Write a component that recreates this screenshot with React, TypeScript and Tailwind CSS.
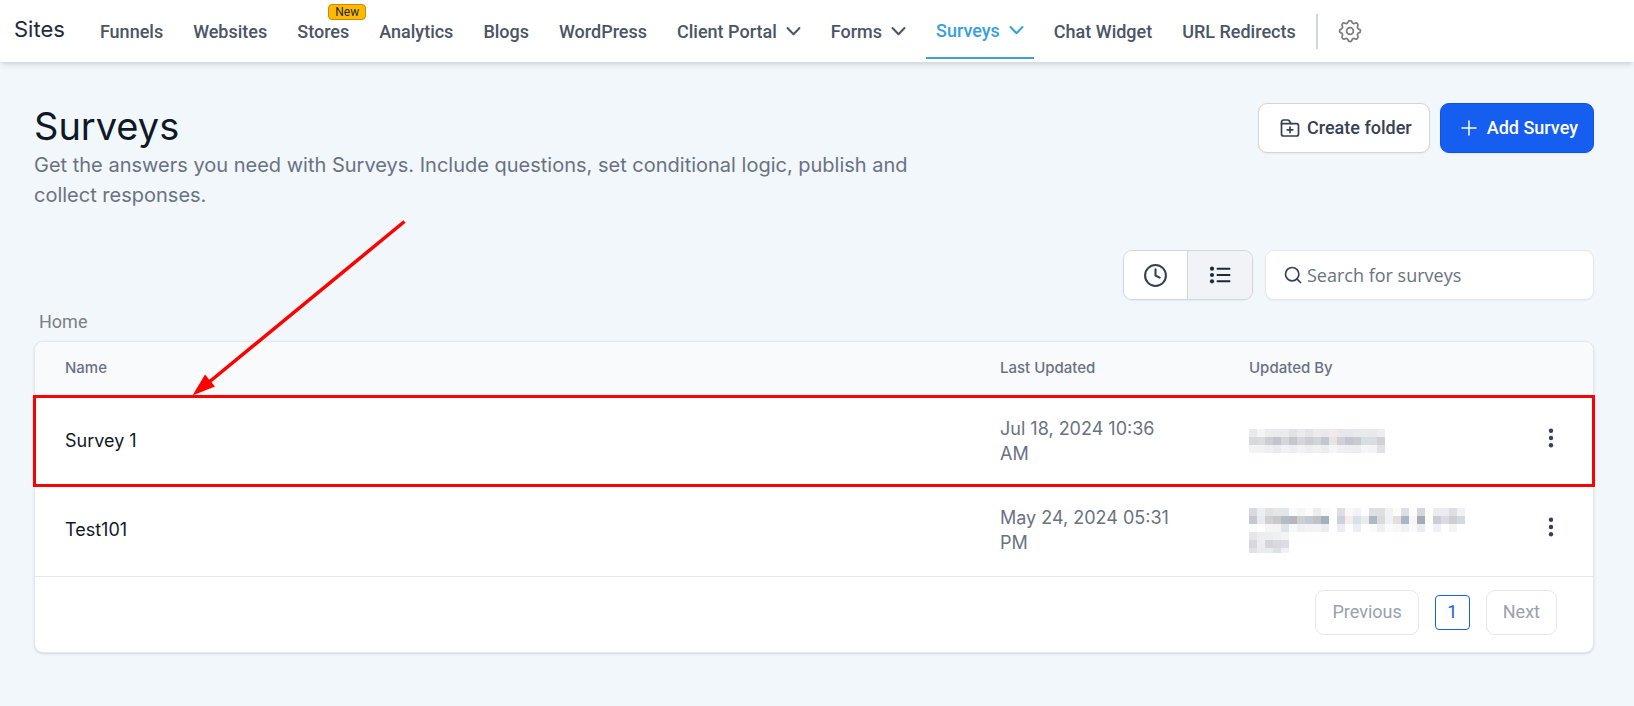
import { Clock, Plus, Search } from "lucide-react";

const navItems = [
  { label: "Funnels" },
  { label: "Websites" },
  { label: "Stores", badge: "New" },
  { label: "Analytics" },
  { label: "Blogs" },
  { label: "WordPress" },
  { label: "Client Portal", menu: true },
  { label: "Forms", menu: true },
  { label: "Surveys", menu: true, active: true },
  { label: "Chat Widget" },
  { label: "URL Redirects" },
];

const surveys = [
  {
    name: "Survey 1",
    updated: "Jul 18, 2024 10:36 AM",
    highlighted: true,
    mask: [
      "e9eaec f4f4f5 ebecee eaebed eaebed e2e2e4 ebebed e4e4e7 ebebee e8e9ec f0ebe9 e8e8ec e4e7ed e9eaec e9eaeb e9e9ea edeef1",
      "d8d9da dcdcdf cdced1 c2c4ce d3d6da c5c7cc d4d6da cdccd0 d0d5da c4c7d0 e9e4e1 cfd1d6 c3c6ce c9cacf d8dde4 dadce2 cfd1d6",
      "f2f4f4 f1f3f3 eeeff1 e9ebee f1f2f4 edeef0 f1f2f3 eeeef1 f0f1f3 ebedf0 f7f6f6 f0f0f3 eceef0 ecedef f4f6f8 f2f3f4 e1e2e4",
    ],
  },
  {
    name: "Test101",
    updated: "May 24, 2024 05:31 PM",
    mask: [
      "d9dadf eaeff3 e2e2e3 e5e6e7 e3e7ea fafafa f5f6f6 fafcfc ecedee fafafa fffefc dcdfe6 fcf6f5 f0f4fa ffffff dfe0e5 dfdfe1 f0f2f8 fffaf5 dae0e6 fffcfa d5d7de fffffa eaecf0 ebecf3 dfdfe3 f0f1f6",
      "c7c7cd ebebef d0d0d2 c9c8ca b2bdcc b5b6c0 cecfd2 c4c8d0 c2c1c5 a5b0bf fffffe ced1d8 f4ede9 d7e1ea ecebec aeb8c4 dadadd eff1f7 e4dfdd abb5c5 f8f5f4 a6abb8 fdfdf8 cacdd4 d9dce7 cecdd1 d3d8e1",
      "fbfafa ffffff f5f5f5 f2f4f6 e0e4e8 f7f8fa eff0f3 f2f3f6 f2f3f6 eaecf0 ffffff ebedf2 fffefe ebeef3 ffffff fafafa efeff1 f9fafc f5f7f8 f0f1f5 fafafc ebedf2 ffffff f0f1f4 ffffff f4f4f5 fdfeff",
      "e5e6e8 ecedf1 eeeef1 f0f0f2 f3f4f4",
      "d5d9df ebedf0 d3d5d8 d9dadf dadee3",
      "e0e2e5 e9edf3 eaebee dce0e7 f1f2f5",
    ],
  },
];

function PixelMask({ rows }: { rows: string[] }) {
  return (
    <svg
      width={rows[0].split(" ").length * 8}
      height={rows.length > 3 ? 45 : 24}
      shapeRendering="crispEdges"
      role="img"
      aria-label="Hidden name"
    >
      {rows.map((row, y) =>
        row.split(" ").map((color, x) => (
          <rect key={`${x}-${y}`} x={x * 8} y={y * 8} width="8" height="8" fill={`#${color}`} />
        ))
      )}
    </svg>
  );
}

function ChevronIcon() {
  return (
    <svg width="15" height="16" viewBox="0 0 15 16" fill="none" stroke="currentColor" strokeWidth="2" strokeLinecap="round" strokeLinejoin="round">
      <path d="M1.5 4l6 6.200 6-6.200" />
    </svg>
  );
}

function CogIcon() {
  return (
    <svg className="size-7" viewBox="0 0 24 24" fill="none" stroke="currentColor" strokeWidth="1.500">
      <path d="M10.325 4.317c.426-1.756 2.924-1.756 3.35 0a1.724 1.724 0 0 0 2.573 1.066c1.543-.94 3.31.826 2.37 2.37a1.724 1.724 0 0 0 1.065 2.572c1.756.426 1.756 2.924 0 3.35a1.724 1.724 0 0 0-1.066 2.573c.94 1.543-.826 3.31-2.37 2.37a1.724 1.724 0 0 0-2.572 1.065c-.426 1.756-2.924 1.756-3.35 0a1.724 1.724 0 0 0-2.573-1.066c-1.543.94-3.31-.826-2.37-2.37a1.724 1.724 0 0 0-1.065-2.572c-1.756-.426-1.756-2.924 0-3.35a1.724 1.724 0 0 0 1.066-2.573c-.94-1.543.826-3.31 2.37-2.37.996.608 2.296.07 2.572-1.065z" />
      <circle cx="12" cy="12" r="2.900" />
    </svg>
  );
}

function FolderPlusIcon() {
  return (
    <svg width="22" height="20" viewBox="0 0 22 20" fill="none" stroke="currentColor" strokeWidth="1.700" strokeLinecap="round" strokeLinejoin="round">
      <path d="M2.500 6V4a2 2 0 0 1 2-2h4.200a1.800 1.800 0 0 1 1.500.8L12 5.700" />
      <path d="M2.500 5.700h15a2 2 0 0 1 2 2V16a2 2 0 0 1-2 2h-13a2 2 0 0 1-2-2z" />
      <path d="M11 9v5.600M8.200 11.800h5.600" />
    </svg>
  );
}

function ListIcon() {
  return (
    <svg width="24" height="24" viewBox="0 0 24 24" fill="currentColor" stroke="currentColor" strokeWidth="2" strokeLinecap="round">
      <path d="M9.500 5.700H21.500M9.500 12H21.500M9.500 18.300H21.500" />
      <g stroke="none">
        <circle cx="4" cy="5.700" r="2.100" />
        <circle cx="4" cy="12" r="2.100" />
        <circle cx="4" cy="18.300" r="2.100" />
      </g>
    </svg>
  );
}

function NavBar() {
  return (
    <header className="relative bg-white shadow-md">
      <nav className="flex h-[62px] items-center font-[Roboto,sans-serif] text-lg font-medium text-gray-600">
        <h2 className="pb-1 pl-3.5 pr-5 font-[Inter,sans-serif] text-[22px] font-normal text-gray-800">
          Sites
        </h2>
        {navItems.map((item) => (
          <a
            key={item.label}
            href="#"
            className={
              item.active
                ? "mx-[5px] flex h-[59px] items-center gap-[9px] self-start border-b-2 border-[#38a0db] px-2.5 pt-1 text-[#38a0db]"
                : "relative flex items-center gap-[9px] px-[15px] pt-0.5"
            }
          >
            {item.label}
            {item.menu && <ChevronIcon />}
            {item.badge && (
              <span className="absolute -top-3 -right-0.5 rounded border border-yellow-600 bg-[#fdb900] px-1.5 text-xs font-normal leading-[14px] text-gray-800">
                {item.badge}
              </span>
            )}
          </a>
        ))}
        <button
          type="button"
          aria-label="Settings"
          className="ml-[5px] flex h-[35px] items-center border-l-2 border-gray-300 pl-[18px] text-[#7d7d7d]"
        >
          <CogIcon />
        </button>
      </nav>
    </header>
  );
}

function PageHeader() {
  return (
    <div className="flex items-start justify-between">
      <div className="max-w-[920px]">
        <h1 className="text-[38px] leading-[47px] text-gray-900">Surveys</h1>
        <p className="text-xl leading-[30px] text-gray-500">
          Get the answers you need with Surveys. Include questions, set
          conditional logic, publish and collect responses.
        </p>
      </div>
      <div className="flex gap-2.5 font-[Roboto,sans-serif] text-lg font-medium">
        <button
          type="button"
          className="flex h-[50px] items-center gap-1.5 rounded-[9px] border border-gray-300 bg-white pl-5 pr-[17px] text-gray-700 shadow-xs"
        >
          <FolderPlusIcon />
          Create folder
        </button>
        <button
          type="button"
          className="flex h-[50px] items-center gap-1.5 rounded-[9px] border border-[#0b53f0] bg-[#155eef] pl-4 pr-[15px] text-white shadow-xs"
        >
          <Plus className="size-6" strokeWidth={1.5} />
          Add Survey
        </button>
      </div>
    </div>
  );
}

function Toolbar() {
  return (
    <div className="mt-10 flex justify-end gap-3">
      <div className="flex h-[50px] overflow-hidden rounded-[9px] border border-gray-300 shadow-xs">
        <button type="button" aria-label="Recent" className="flex w-[63px] items-center justify-center bg-white text-gray-700">
          <Clock className="size-[25px]" />
        </button>
        <button type="button" aria-label="List" className="flex w-[65px] items-center justify-center border-l border-gray-300 bg-[#f2f3f7] text-gray-800">
          <ListIcon />
        </button>
      </div>
      <label className="flex h-[50px] w-[329px] items-center gap-1 rounded-[9px] border border-gray-200 bg-white px-[17px] shadow-xs">
        <Search className="size-5 text-gray-700" />
        <input
          type="search"
          aria-label="Search for surveys"
          placeholder="Search for surveys"
          className="min-w-0 flex-1 font-['Open_Sans',sans-serif] text-lg outline-none placeholder:text-gray-500"
        />
      </label>
    </div>
  );
}

function SurveyTable() {
  return (
    <div className="rounded-[9px] border border-gray-200 bg-white shadow-sm">
      <table className="w-full table-fixed text-left">
        <thead>
          <tr className="h-[55px] text-[15px] text-gray-500">
            <th className="rounded-tl-[9px] bg-gray-50 pb-0.5 pl-[30px] font-medium">Name</th>
            <th className="w-[249px] bg-gray-50 pb-0.5 pl-[30px] font-medium">Last Updated</th>
            <th className="w-[289px] bg-gray-50 pb-0.5 pl-[30px] font-medium">Updated By</th>
            <th aria-label="Actions" className="w-[85px] rounded-tr-[9px] bg-gray-50" />
          </tr>
        </thead>
        <tbody>
          {surveys.map((survey) => (
            <tr
              key={survey.name}
              className={
                survey.highlighted
                  ? "h-[88px] outline-3 -outline-offset-1 outline-[#ff0000]"
                  : "h-[91px] border-b border-gray-200"
              }
            >
              <td className="pl-[30px] text-lg text-gray-900">{survey.name}</td>
              <td className="pl-[30px] pr-10 text-lg leading-[25px] text-gray-500">{survey.updated}</td>
              <td className="pl-[30px]">
                <PixelMask rows={survey.mask} />
              </td>
              <td>
                <button type="button" aria-label={`Options for ${survey.name}`} className="flex w-full justify-center pb-1.5 text-gray-700">
                  <svg width="20" height="24" viewBox="0 0 20 24" fill="currentColor">
                    <circle cx="10" cy="4.700" r="2.200" />
                    <circle cx="10" cy="12" r="2.200" />
                    <circle cx="10" cy="19.300" r="2.200" />
                  </svg>
                </button>
              </td>
            </tr>
          ))}
        </tbody>
      </table>
      <div className="flex items-center justify-end gap-4 pb-[17px] pr-9 pt-[13px] font-[Roboto,sans-serif] text-lg text-gray-400">
        <button type="button" className="h-[45px] rounded-[9px] border border-gray-200 px-4">
          Previous
        </button>
        <button type="button" className="size-[35px] rounded border border-[#155eef] text-[#155eef]">
          1
        </button>
        <button type="button" className="h-[45px] rounded-[9px] border border-gray-200 px-4">
          Next
        </button>
      </div>
    </div>
  );
}

function Arrow() {
  return (
    <svg
      className="pointer-events-none absolute left-[190px] top-[218px]"
      width="220"
      height="180"
      viewBox="190 218 220 180"
      aria-hidden="true"
    >
      <line x1="404.500" y1="221.500" x2="208" y2="383" stroke="#ff0000" strokeWidth="3.500" />
      <polygon points="192.500,395.500 205,374.500 215,386.500" fill="#ff0000" />
    </svg>
  );
}

export default function App() {
  return (
    <div className="relative min-h-screen bg-[#f1f7fa] font-[Inter,sans-serif]">
      <NavBar />
      <main className="pl-[34px] pr-10 pt-[41px]">
        <PageHeader />
        <Toolbar />
        <a href="#" className="ml-[5px] block pb-[5px] pt-2 font-[Roboto,sans-serif] text-lg text-[#7b7f86]">
          Home
        </a>
        <SurveyTable />
      </main>
      <Arrow />
    </div>
  );
}
